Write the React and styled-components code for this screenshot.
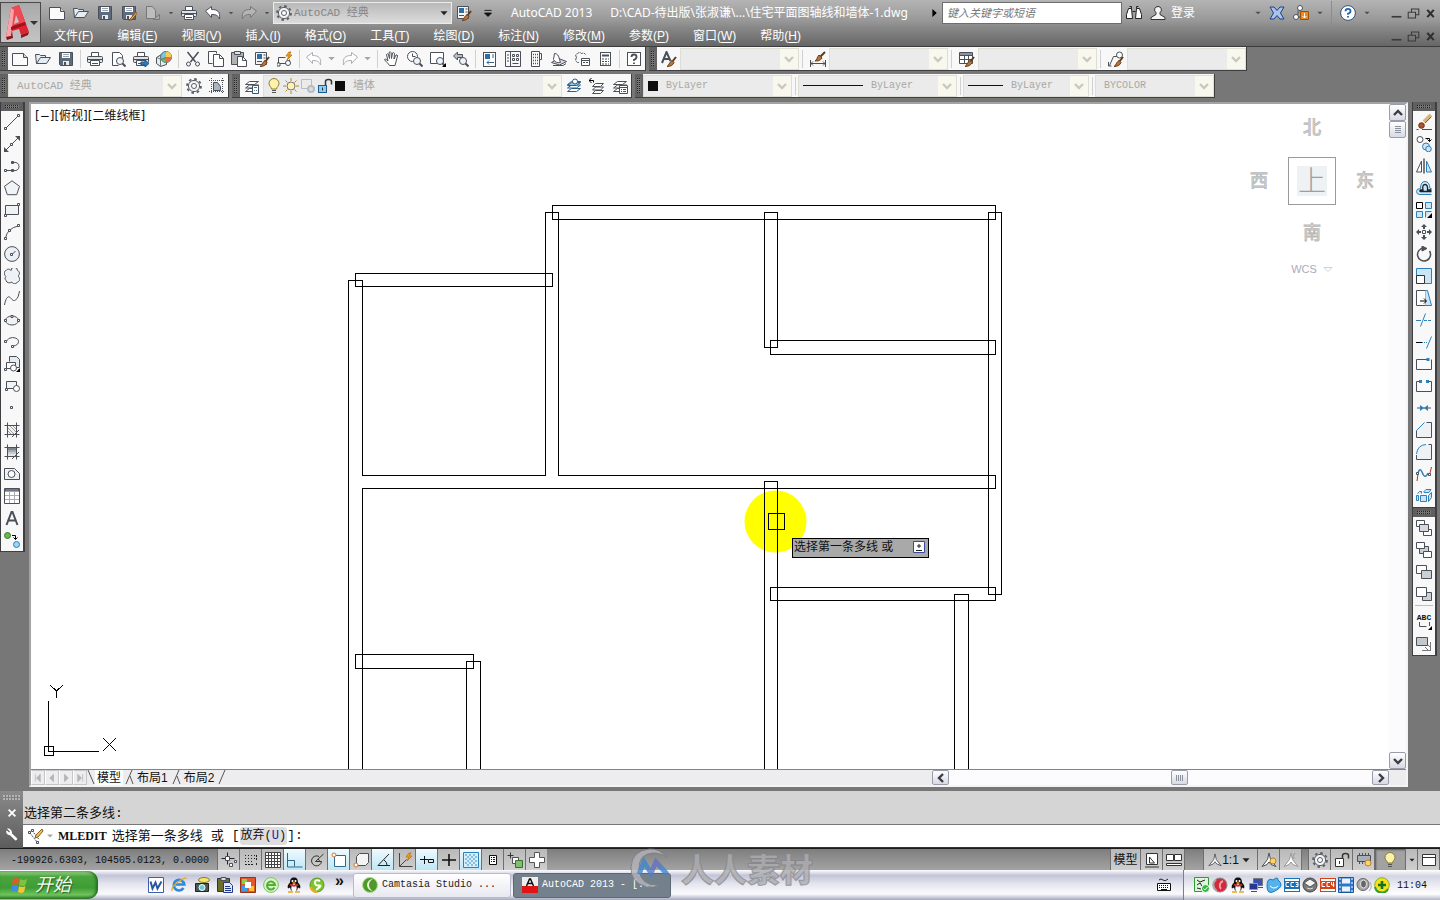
import React, { useState } from 'react';
import styled, { createGlobalStyle, css } from 'styled-components';

const SANS = '"Liberation Sans", "Noto Sans CJK SC", sans-serif';
const MONO = '"Liberation Mono", "Noto Sans CJK SC", monospace';
const TITLE = '"Noto Sans", "Noto Sans CJK SC", sans-serif';

const INK = '#4b4f58';
const BLUE = '#2f7fb8';
const SKY = '#c9e6f7';
const PALE = '#e6ebef';

/* ---------- icons ---------- */

const brush = (
    <>
        <path d="M15 6l-4 5" stroke="#5b3a1c" strokeWidth="2"/>
        <path d="M11 9.500l2 2c-1 3-4 4-7 4 2-1 2-4 5-6z" fill="#b9743a" stroke="#6b3f1a"/>
    </>
);
const disk = (
    <>
        <path d="M1.500 1.500h13v13h-12l-1-1z" fill="#5d6c7c"/>
        <path d="M4 2h8v5h-8z" fill="#fff" stroke="none"/>
        <path d="M5 3.500h6M5 5.500h6" stroke="#9aa5ae"/>
        <path d="M5 10h6v4h-6z" fill="#e8ecef" stroke="none"/>
        <path d="M6 11h2v3h-2z" fill={INK} stroke="none"/>
    </>
);
const printer = (
    <>
        <path d="M4.500 5.500v-4h7v4" fill="#fff"/>
        <rect x=".5" y="5.500" width="15" height="6" rx="1" fill="#dfe3e7"/>
        <path d="M1 8.500h14" stroke="#4b4f58"/>
        <path d="M3.500 9.500h9v5h-9z" fill="#fff"/>
        <path d="M5 12.500h6"/>
    </>
);
const lens = (
    <>
        <circle cx="10" cy="10" r="3.500" fill="#eef5fa"/>
        <path d="M12.500 12.500l3 3" strokeWidth="2"/>
    </>
);
const gear = (
    <>
        <circle cx="8" cy="8" r="7" strokeWidth="1.800" strokeDasharray="2.600 2.900" stroke="#5a5e66"/>
        <circle cx="8" cy="8" r="5.600" fill="#f4f4f4" stroke="#5a5e66"/>
        <circle cx="8" cy="8" r="2.500" fill="#fff" stroke="#5a5e66"/>
    </>
);
const bulb = (
    <>
        <path d="M5.500 11c0-2-2.500-3-2.500-5.500a5 5 0 0 1 10 0c0 2.500-2.500 3.500-2.500 5.500z" fill="#fdf3a8" stroke="#8a7a3c"/>
        <path d="M6 12.500h4M6 14.500h4" stroke="#555"/>
    </>
);
const layers = (
    <>
        <path d="M1.500 13.500l4-3h9l-4 3z" fill="#fff"/>
        <path d="M1.500 10l4-3h9l-4 3z" fill="#fff"/>
        <path d="M1.500 6.500l4-3h9l-4 3z" fill="#fff"/>
    </>
);
const penguin = (
    <>
        <path d="M8 .5c-3 0-4 2-4 5-2 2-3 4-2 6l2-1 1 3h6l1-3 2 1c1-2 0-4-2-6 0-3-1-5-4-5z" fill="#111" stroke="none"/>
        <path d="M8 7c-3 0-3.500 6-1.500 7h3c2-1 1.500-7-1.500-7z" fill="#fff" stroke="none"/>
        <path d="M4 7.500q4 2.500 8 0" stroke="#e02a1a" strokeWidth="2"/>
        <circle cx="6.500" cy="4" r="1" fill="#fff" stroke="none"/>
        <circle cx="9.500" cy="4" r="1" fill="#fff" stroke="none"/>
        <path d="M2 15h5M9 15h5M6.500 6h3" stroke="#f2a01a" strokeWidth="1.500"/>
    </>
);
const person = <path d="M8 1.500a3.300 3.300 0 0 1 2 6v2l5 3v2h-14v-2l5-3v-2a3.300 3.300 0 0 1 2-6z" fill="#f4f4f4" stroke="#333"/>;
const scaleMan = <path d="M8 1l1.500 6.500 5.500 7-5-2-2-2.500-2 2.500-5 2 5.500-7z" fill="#fff"/>;
const frame = <path d="M.5 3.500h15M.5 12.500h15M3.500 .5v15M12.500 .5v15"/>;
const orangeSpark = <path d="M12 1l-3 4h3l-2 4 5-5h-3l2-3z" fill="#f5a623" stroke="#c97a12"/>;
const unlocked = (
    <>
        <rect x="1.500" y="7.500" width="8" height="7" fill="#8ccdf5" stroke="#1c5c8c"/>
        <path d="M8.500 7v-3.500q0-2 3-2t3 2v3" stroke="#333" strokeWidth="1.500"/>
        <path d="M5.500 9.500v3" stroke="#333"/>
    </>
);

const icons = {
    new: (
        <>
            <path d="M.5 2.500h11l4 4v8h-15z" fill="#fbfbfb"/>
            <path d="M11.500 2.500v4h4" fill="#cfd5da"/>
        </>
    ),
    open: <path d="M1.500 12.500l-1-9h4l1 1h5v2M1.500 12.500l4-6h10l-4 6z" fill="#e3edf3"/>,
    save: disk,
    saveAs: (
        <>
            {disk}
            <path d="M15 7l-5 6-2 2.500 3-1 5-6z" fill="#f5b14a" stroke="#8a4d12"/>
        </>
    ),
    exportGrey: (
        <g stroke="#777">
            <path d="M1.500 1.500h6l3 4v8h-9z" fill="#bdbdbd"/>
            <path d="M8.500 14.500l6-5v5z" fill="#aaa"/>
        </g>
    ),
    print: printer,
    preview: (
        <>
            <path d="M2.500 14.500v-13h7l3 3v3M2.500 14.500h6" fill="#fff"/>
            {lens}
        </>
    ),
    publish: (
        <>
            {printer}
            <path d="M8 11h4v-2l4 3.500-4 3.500v-2h-4z" fill="#2d7cc0" stroke="#1b578c"/>
        </>
    ),
    globe3d: (
        <>
            <path d="M.5 6.500l5-3 5 2v8l-6 2-4-3z" fill="#e6eef3"/>
            <circle cx="10" cy="6" r="5.500" fill="#7cc4e8" stroke="#4b6f80"/>
            <path d="M10 .5v6h5.500a5.500 5.500 0 0 0-5.500-6z" fill="#f2d04c" stroke="none"/>
            <path d="M10 6h5.500a5.500 5.500 0 0 1-5.500 5.500z" fill="#e0704c" stroke="none"/>
            <path d="M10 11.500a5.500 5.500 0 0 1-5-4l5-1.500z" fill="#6ab85a" stroke="none"/>
            <path d="M4.500 8v7M1 6.500l4 2 5-2" stroke="#6d7880"/>
        </>
    ),
    cut: (
        <>
            <path d="M2.500 1l8 10M13.500 1l-8 10" strokeWidth="1.500"/>
            <circle cx="3.500" cy="13" r="2"/>
            <circle cx="12.500" cy="13" r="2"/>
        </>
    ),
    copyDoc: (
        <>
            <path d="M.5 12.500v-12h8v2" fill="#fff"/>
            <path d="M.5 12.500h4"/>
            <path d="M5.500 3.500h6l4 4v8h-10z" fill="#fff"/>
            <path d="M11.500 3.500v4h4"/>
        </>
    ),
    paste: (
        <>
            <path d="M.5 1.500h12v12h-12z" fill="#aeb3b4"/>
            <path d="M3.500 .5h6v3h-6z" fill="#dfe3e7"/>
            <path d="M6.500 5.500h5l4 4v6h-9z" fill="#fff"/>
            <path d="M11.500 5.500v4h4"/>
        </>
    ),
    match: (
        <>
            <path d="M1.500 1.500h11v12h-11z" fill="#f2f4f6"/>
            <path d="M3 3h5v5h-5z" fill="#2f6ea3" stroke="none"/>
            <path d="M9.500 4h2M9.500 7h2M3 10.500h5"/>
            {brush}
        </>
    ),
    blockEdit: (
        <>
            <path d="M1.500 6.500h7M1.500 6.500v6h11v-4"/>
            <circle cx="11" cy="12" r="2.500" fill="#fff"/>
            <path d="M0 12h3v3h-3z" fill="#fff"/>
            {orangeSpark}
        </>
    ),
    undo: <path d="M.5 6l6-4.500v3c6 0 9 2 8 9.500-1.500-4-4-4.500-8-4.500v3z" fill="#fff"/>,
    undoDim: <path d="M.5 6l6-4.500v3c6 0 9 2 8 9.500-1.500-4-4-4.500-8-4.500v3z" fill="#fff" stroke="#aaadb2"/>,
    redoDim: <path d="M15.500 6l-6-4.500v3c-6 0-9 2-8 9.500 1.500-4 4-4.500 8-4.500v3z" fill="#fff" stroke="#aaadb2"/>,
    redoGrey: <path d="M15.500 6l-6-4.500v3c-6 0-9 2-8 9.500 1.500-4 4-4.500 8-4.500v3z" fill="#b5b5b5" stroke="#777"/>,
    pan: <path d="M5.500 14.500c-1-2-4-4-5-6 1-1 2 0 3.500 1.500l-1.500-6.500q1.500-1.500 2 0l1 4-.5-6q1.500-1.500 2 0l.5 6 1-5.500q1.500-1 2 .5l-.5 5.500 2-4q1.500-.5 1.500 1l-2.500 9.500z" fill="#fff"/>,
    zoomRt: (
        <>
            <circle cx="5.500" cy="5.500" r="5" fill="#fff"/>
            <path d="M5.500 2.500v3h3"/>
            {lens}
        </>
    ),
    zoomWin: (
        <>
            <path d="M.5 1.500h13v11h-13z" fill="#fff"/>
            {lens}
            <path d="M16 12v4h-4z" fill="#000" stroke="none"/>
        </>
    ),
    zoomPrev: (
        <>
            <path d="M.5 5l4-4v2.500h5v3h-5v2.500z" fill="#b9bdc2"/>
            {lens}
        </>
    ),
    props: (
        <>
            <rect x="1.500" y="1.500" width="12" height="14" fill="#fff"/>
            <path d="M3 3h5v5h-5z" fill="#2f6ea3" stroke="none"/>
            <path d="M10 4h2M10 6h2M5 11.500h7M7 9.500l-2 2 2 2" stroke="#36648a"/>
        </>
    ),
    design: (
        <>
            <path d="M.5 .5h15v15h-15zM5.500 .5v15"/>
            <path d="M7.500 3.500h2v2h-2zM11.500 3.500h2v2h-2zM7.500 7.500h2v2h-2zM11.500 7.500h2v2h-2zM7.500 12.500h6M2 4h2M2 7h2M2 10h2"/>
        </>
    ),
    palettes: (
        <>
            <path d="M3.500 .5h8v15h-8zM11.500 2.500h2v6h-2" fill="#fff"/>
            <path d="M5 3.500h5M5 6.500h5M5 9.500h5M5 12.500h5" strokeDasharray="1 1" strokeWidth="1.500"/>
        </>
    ),
    sheets: (
        <>
            <path d="M.5 11.500l7-4 8 3-7 3.500z" fill="#dbe0e5"/>
            <path d="M2.500 8.500l1-6q4 0 5 6l1 3q-5 1-7-3z" fill="#fff"/>
            <path d="M2 14.500h10l3-2"/>
        </>
    ),
    markup: (
        <>
            <path d="M2.500 6.500q-2-3 1-4 2-2 4 0 3-1 4 1" strokeDasharray="3 1"/>
            <path d="M2.500 6.500q-2 3 1 5h2" strokeDasharray="3 1"/>
            <path d="M7.500 7.500h8v7h-8zM7.500 9.500h8M9 11.500h2M12 11.500h2" fill="#fff"/>
        </>
    ),
    calc: (
        <>
            <rect x="3.500" y="1.500" width="10" height="13" fill="#fff"/>
            <path d="M5 4.500h7" strokeWidth="2"/>
            <path d="M5 8h2M8 8h2M11 8h1M5 10.500h2M8 10.500h2M11 10.500h1M5 13h2M8 13h2M11 13h1"/>
        </>
    ),
    help: (
        <>
            <rect x="1.500" y="1.500" width="13" height="13" fill="#fff"/>
            <path d="M5.500 6q0-2.500 2.500-2.500t2.500 2.300-2.500 3v1.200M8 11.500v1.500" strokeWidth="1.800"/>
        </>
    ),
    textStyle: (
        <>
            <path d="M1 12l4.500-11 4 9M2.500 8h6" strokeWidth="2"/>
            {brush}
        </>
    ),
    dimStyle: (
        <>
            <path d="M.5 9v7M15.500 9v7M.5 12.500h15M3 10.500l-2 2 2 2M13 10.500l2 2-2 2"/>
            <path d="M15 1l-5 5" stroke="#5b3a1c" strokeWidth="2"/>
            <path d="M9 4l3 3c-2 3-4 3-7 3 2-1 2-4 4-6z" fill="#b9743a" stroke="#6b3f1a"/>
        </>
    ),
    tableStyle: (
        <>
            <path d="M.5 1.500h13v11h-13zM.5 4.500h13M.5 8.500h13M5.500 4.500v8M9.500 4.500v8" fill="#fff"/>
            <path d="M1 2h12v2h-12z" fill="#8d939c" stroke="none"/>
            {brush}
        </>
    ),
    leaderStyle: (
        <>
            <path d="M1.500 14.500l4-9h4M.5 11v4h3"/>
            <circle cx="11.500" cy="4" r="3" fill="#fff"/>
            {brush}
        </>
    ),
    gear,
    wsFrame: (
        <>
            <path d="M0 2.500h16M0 13.500h16M2.500 0v16M13.500 0v16" strokeDasharray="1 1"/>
            <path d="M4.500 12.500v-8h4l3 4v4z" fill="#a9b6c2"/>
        </>
    ),
    layerMgr: (
        <>
            {layers}
            <path d="M8.500 7.500h6v8h-6z" fill="#fff"/>
            <path d="M10 9.500h3M10 12.500h1M12 12.500h1" stroke={BLUE}/>
        </>
    ),
    bulb,
    sun: (
        <>
            <circle cx="8" cy="8" r="4" fill="#fbf3ae" stroke="#777"/>
            <path d="M8 0v3M8 13v3M0 8h3M13 8h3M2.500 2.500l2 2M11.500 11.500l2 2M13.500 2.500l-2 2M4.500 11.500l-2 2" stroke="#b8892a"/>
        </>
    ),
    vpFreeze: (
        <g stroke="#b9bcc0">
            <path d="M1.500 1.500h10v9h-10z"/>
            <circle cx="11" cy="11" r="3" strokeWidth="2" fill="#ddd"/>
        </g>
    ),
    unlocked,
    layerCur: (
        <g stroke="#2b5f88">
            {layers}
            <path d="M1.500 7.500l4-3h9l-4 3z" fill="#8fc7ea"/>
            <circle cx="9" cy="3.500" r="2.500" fill="#fff"/>
        </g>
    ),
    layerPrev: (
        <>
            <path d="M3.500 15.500l3-3h8l-3 3z" fill="#fff"/>
            <path d="M3.500 12l3-3h8l-3 3z" fill="#fff"/>
            <path d="M3.500 8.500l3-3h8l-3 3z" fill="#fff"/>
            <path d="M0 2.500h4.500v2M2.500 0l-2.500 2.500 2.500 2.500" stroke="#000"/>
        </>
    ),
    layerState: (
        <>
            {layers}
            <path d="M7.500 7.500h8v8h-8zM7.500 9.500h8M9 11.500h1M11 11.500h3M9 13.500h1M11 13.500h3" fill="#fff"/>
        </>
    ),
    /* draw */
    line: <path d="M2 14l12-12M.5 13.500h2v2h-2zM13.500 .5h2v2h-2z" fill="#fff"/>,
    xline: (
        <>
            <path d="M2 14l12-12"/>
            <path d="M0 16v-5l5 5zM16 0v5l-5-5z" fill={INK} stroke="none"/>
            <path d="M6.500 7.500h2v2h-2z" fill="#fff"/>
        </>
    ),
    pline: <path d="M2 12.500h6q7 1 7-4t-7-4M.5 11.500h2v2h-2zM7.500 11.500h2v2h-2zM7.500 3.500h2v2h-2z" fill="none"/>,
    polygon: <path d="M8 .8l7.500 5.500-2.800 8.400h-9.400l-2.800-8.400z" fill="#f1f4f6"/>,
    rect: (
        <>
            <path d="M1.500 3.500h13v9h-13z" fill="#eef2f4"/>
            <path d="M.5 12.500h2v2h-2zM13.500 1.500h2v2h-2z" fill="#fff"/>
        </>
    ),
    arc: (
        <>
            <path d="M1.500 14q2-10 13-12"/>
            <path d="M.5 13.500h2v2h-2zM4.500 5.500h2v2h-2zM13.500 .5h2v2h-2z" fill="#fff"/>
        </>
    ),
    circle: (
        <>
            <circle cx="8" cy="8" r="7.400" fill="#eaf0f4"/>
            <path d="M8.500 8l3-3M6.500 7.500h2v2h-2z" fill="#fff"/>
        </>
    ),
    cloud: <path d="M7 2.500a3.200 3.200 0 0 1 6.500 0c2.500 1 2.500 4 .5 5.500 2.500 2 2 5.500-.5 6-1.500 2.500-5 2-5.500 0-2 1.500-5.500 1-6-1.500-1.500-1.500-1-3.500 0-4-2.500-2-2-5.500 0-6 1.500-2 4-1.500 5 0z" fill="#eef2f4"/>,
    spline: <path d="M.5 15c1-6 3-9 5-8s3 5 6 3 3-5 4-9"/>,
    ellipse: (
        <>
            <ellipse cx="8" cy="8.500" rx="6.500" ry="4.500" fill="#eef2f4"/>
            <path d="M.5 7.500h2v2h-2zM13.500 7.500h2v2h-2zM7 3.500h2v2h-2z" fill="#fff"/>
        </>
    ),
    ellipseArc: <path d="M2.500 7q2-3.500 6-3.500 6 .5 6 4t-5 4.500M.5 6.500h2v2h-2zM7.500 11.500h2v2h-2z"/>,
    insert: (
        <>
            <path d="M5.500 5.500v-5h7l3 3v8h-3" fill={PALE}/>
            <path d="M2.500 6.500h9v6h-9z" fill="#fff"/>
            <circle cx="9.500" cy="12" r="3" fill="#fff"/>
            <path d="M.5 12.500h2v2h-2z" fill="#fff"/>
            <path d="M16 12v4h-4z" fill="#000" stroke="none"/>
        </>
    ),
    block: (
        <>
            <path d="M2.500 3.500h10v7h-10z" fill="#f1f4f6"/>
            <circle cx="12.500" cy="10.500" r="3" fill="#fff"/>
            <path d="M1.500 10.500h2v2h-2z" fill="#fff"/>
        </>
    ),
    point: <path d="M6.500 6.500h2v2h-2z"/>,
    hatch: (
        <>
            <path d="M4 4h8v8h-8z" fill="#f2f2f2" stroke="none"/>
            <path d="M4 6l6 6M4 9l3 3M6 4l6 6M9 4l3 3" stroke="#999"/>
            {frame}
            <path d="M8 15l7-7"/>
        </>
    ),
    gradient: (
        <>
            <path d="M4 4h8v8h-8z" fill="#e6e6e6" stroke="none"/>
            <path d="M4 5h8" stroke="#7d848c" strokeWidth="2"/>
            <path d="M4 7h8" stroke="#a3a9af" strokeWidth="2"/>
            <path d="M4 9h8" stroke="#c8ccd0" strokeWidth="2"/>
            {frame}
            <path d="M8 15l7-7"/>
        </>
    ),
    region: (
        <>
            <path d="M.5 2.500h10l5 5v6h-15z" fill="#eef2f4"/>
            <circle cx="7.500" cy="8" r="3.500" fill="#fff"/>
        </>
    ),
    table: (
        <>
            <path d="M.5 .5h15v15h-15z" fill="#fff"/>
            <path d="M1 1h14v2h-14z" fill="#9aa0b0"/>
            <path d="M5.500 4v11M10.500 4v11M1 7.500h14M1 11.500h14" stroke="#a9adb3"/>
        </>
    ),
    mtext: <path d="M2.500 15l5-13h1l5 13M4.500 10.500h7" strokeWidth="2"/>,
    addSel: (
        <>
            <circle cx="3.500" cy="3.500" r="3" fill="#6bb84f" stroke="#3d7a2a"/>
            <circle cx="12.500" cy="12.500" r="3" fill="#9bd4f7" stroke={BLUE}/>
            <path d="M8 3.500h3.500v4M9.500 5.500l2 2 2-2" stroke="#000"/>
        </>
    ),
    /* modify */
    erase: (
        <>
            <path d="M15 1l-7 7" stroke="#d9b37c" strokeWidth="4"/>
            <path d="M15 3l-6 6" stroke="#6b6b4a"/>
            <circle cx="5.500" cy="11.500" r="2.800" fill="#a6552d" stroke="#6e3213"/>
            <path d="M.5 15.500h2M6 15.500h10"/>
        </>
    ),
    copy: (
        <>
            <circle cx="4" cy="3.500" r="3" fill="#fff"/>
            <path d="M9.500 2.500h4v3M11.500 3.500l2 2 2-2" stroke="#000"/>
            <circle cx="10" cy="10.500" r="3.500" fill={SKY} stroke={BLUE}/>
            <circle cx="12.500" cy="13" r="2.800" fill={SKY} stroke={BLUE}/>
        </>
    ),
    mirror: (
        <>
            <path d="M5.500 3v11h-5z" fill="#fff"/>
            <path d="M10.500 3v11h5z" fill={SKY} stroke={BLUE}/>
            <path d="M8 .5v15" stroke="#000"/>
        </>
    ),
    offset: (
        <>
            <path d="M15.500 14.500h-11.500q-3.500 0-3.500-3t4-3q0-7 4.500-7t5 7h1.500" fill={SKY} stroke={BLUE}/>
            <path d="M15.500 11.500h-11q-1.500-.5 0-1.500h2.500q-1-5.500 2-5.500t2.500 5.500h4" strokeWidth="1.300" stroke="#222"/>
        </>
    ),
    array: (
        <>
            <path d="M.5 .5h6v6h-6z" fill="#fff" stroke="#000"/>
            <path d="M9.500 .5h6v6h-6zM.5 9.500h6v6h-6zM9.500 15.500v-6h6" fill={SKY} stroke={BLUE}/>
            <path d="M16 11v5h-5z" fill="#000" stroke="none"/>
        </>
    ),
    move: (
        <>
            <path d="M8 1v4M8 11v4M1 8h4M11 8h4" strokeWidth="2"/>
            <path d="M5 3l3-3 3 3zM5 13l3 3 3-3zM3 5l-3 3 3 3zM13 5l3 3-3 3z" fill={INK} stroke="none"/>
            <path d="M6.500 6.500h3v3h-3z" fill="#fff"/>
        </>
    ),
    rotate: (
        <>
            <path d="M8 2a6.500 6.500 0 1 0 5.500 3" strokeWidth="1.500"/>
            <path d="M6 0l5 2.500-5 2.500z" fill={INK}/>
        </>
    ),
    scale: (
        <>
            <path d="M.5 .5h15v15h-15z" fill={SKY} stroke={BLUE}/>
            <path d="M.5 7.500h8v8h-8z" fill="#fff" stroke="#333"/>
        </>
    ),
    stretch: (
        <>
            <path d="M9.500 .5h2l4 15h-6z" fill={SKY} stroke={BLUE}/>
            <path d="M9.500 .5h-9v15h9" fill="#fff"/>
            <path d="M4 11h6M8 8.500l2.500 2.500-2.500 2.500" stroke="#000"/>
        </>
    ),
    trim: (
        <g stroke={BLUE}>
            <path d="M4.500 14.500l5-13M0 8.500h5"/>
            <path d="M8 8.500h8" strokeDasharray="3 1"/>
        </g>
    ),
    extend: (
        <>
            <path d="M0 8.500h6" stroke="#000"/>
            <path d="M6 8.500h5" stroke={BLUE} strokeDasharray="1 1"/>
            <path d="M10.500 14.500l5-12" stroke={BLUE}/>
        </>
    ),
    breakPt: (
        <>
            <path d="M.5 3.500v10h15v-10M.5 3.500h11" fill="#f8fafc"/>
            <path d="M10.500 2h3v3h-3z" fill={BLUE} stroke="none"/>
        </>
    ),
    breakTwo: (
        <>
            <path d="M3 3.500h-2.500v10h15v-10h-2.500" fill="#f8fafc"/>
            <path d="M3 2h3v3h-3zM10 2h3v3h-3z" fill={BLUE} stroke="none"/>
        </>
    ),
    join: (
        <>
            <path d="M1 8h14"/>
            <path d="M4 5l4 3-4 3zM12 5l-4 3 4 3z" fill={BLUE} stroke="none"/>
        </>
    ),
    chamfer: (
        <>
            <path d="M.5 8.500v7h15v-15h-7z" fill="#eef2f4" stroke="none"/>
            <path d="M.5 8.500v7h15v-15h-5"/>
            <path d="M.5 8.500l8-8" stroke={BLUE}/>
        </>
    ),
    fillet: (
        <>
            <path d="M.5 10q1-9 9.500-9.500h5.500v15h-15z" fill="#eef2f4" stroke="none"/>
            <path d="M.5 11v4.500h15v-15h-3"/>
            <path d="M.5 10q1-9 9.500-9.500" stroke={BLUE}/>
        </>
    ),
    blend: (
        <>
            <path d="M2 7q2-6 4-1 3 8 6 1" stroke={BLUE} strokeWidth="1.500"/>
            <path d="M1 15l1-7M14 7l1.500-6" stroke="#a33"/>
            <path d="M.5 6.500h2v2h-2zM12.500 7.500h2v2h-2z" fill="#fff"/>
        </>
    ),
    explode: (
        <g stroke={BLUE} fill={SKY}>
            <path d="M4.500 7.500h6v6h-6zM1.500 5.500l2-2h2v2M8 3.500l2-2h5l-2 3h-5zM12.500 7.500l3-3v5l-3 4zM.5 7.500h2v5h-2z"/>
        </g>
    ),
    orderFront: (
        <>
            <path d="M.5 .5h8v6h-8z" fill="#fff"/>
            <path d="M7.500 9.500h8v6h-8z" fill="#fff"/>
            <path d="M3.500 4.500h9v7h-9z" fill="#d5d9dd"/>
        </>
    ),
    orderBack: (
        <>
            <path d="M3.500 4.500h9v7h-9z" fill="#c9ced3"/>
            <path d="M.5 .5h8v6h-8z" fill="#fff"/>
            <path d="M7.500 9.500h8v6h-8z" fill="#fff"/>
        </>
    ),
    orderAbove: (
        <>
            <path d="M.5 1.500h10v8h-10z" fill="#fff"/>
            <path d="M5.500 6.500h10v8h-10z" fill="#cbd0d5"/>
        </>
    ),
    orderUnder: (
        <>
            <path d="M6.500 6.500h9v8h-9z" fill="#cbd0d5"/>
            <path d="M.5 1.500h10v9h-10z" fill="#fff"/>
        </>
    ),
    orderHatch: (
        <>
            <path d="M6 14.500h9M14.500 6v9M9 11l4 4M12 9l3 3" stroke="#777"/>
            <path d="M.5 1.500h11v8h-11z" fill="#c3c8cd"/>
        </>
    ),
    /* title bar */
    binoculars: (
        <>
            <path d="M2.500 3.500h3l1 10h-6v-4zM13.500 3.500h-3l-1 10h6v-4z" fill="#fff" stroke="#222"/>
            <path d="M3.500 1.500h2v2M12.500 1.500h-2v2M6.500 6.500h3" stroke="#222"/>
        </>
    ),
    person,
    exchange: (
        <path d="M1 2h4l3 3.500 3-3.500h4l-3.500 6 3.500 6h-4l-3-3.500-3 3.500h-4l3.500-6z" fill="#a9c4ea" stroke="#1d3f86"/>
    ),
    network: (
        <>
            <path d="M6 4l-1.500 6M4 12h4" stroke="#777" strokeWidth="2"/>
            <circle cx="7" cy="3" r="2.500" fill="#fff"/>
            <circle cx="3" cy="12" r="2.500" fill="#fff"/>
            <path d="M7.500 6.500h8v8h-8z" fill="#e98a23" stroke="#9c4f08"/>
            <path d="M11.500 8v5M9.500 11l2 2 2-2" stroke="#fff"/>
        </>
    ),
    helpRound: (
        <>
            <circle cx="8" cy="8" r="7.400" fill="#fff" stroke="#33506e"/>
            <path d="M5.500 6.300q0-2.500 2.500-2.500t2.500 2.200-2.500 2.700v1M8 11v1.600" stroke="#1f62b0" strokeWidth="1.800"/>
        </>
    ),
    minimize: <path d="M2 12h12" stroke="#3a3a3a" strokeWidth="2"/>,
    restore: <path d="M5.500 6.500v-4h9v7h-4M1.500 6.500h9v7h-9z" stroke="#3a3a3a" strokeWidth="1.300"/>,
    close: <path d="M4 3.500l8 9M12 3.500l-8 9" stroke="#2f2f2f" strokeWidth="2.600"/>,
    /* command line */
    wrench: <path d="M3 2l3 3-1 2-3-2.500q-1 4 4 4.500l6 6q2-.5 1.500-2l-6-5.500q.5-5-4.500-5.500z" fill="#fff" stroke="#fff"/>,
    cross: <path d="M3.500 3.500l9 9M12.500 3.500l-9 9" stroke="#fff" strokeWidth="2.400"/>,
    editLine: (
        <>
            <path d="M2 5l7 9M4 2.500l7 9" strokeDasharray="2 1"/>
            <path d="M.5 3.500h2v2h-2zM3.500 1.500h2v2h-2zM8.500 13.500h2v2h-2z" fill="#fff"/>
            <path d="M14 1l-6 6-1 3 3-1 5-6z" fill="#f0bf62" stroke="#8a5d1a"/>
        </>
    ),
    /* status bar */
    infer: (
        <>
            <path d="M.5 6.500h13M6.500 .5v12" stroke="#222"/>
            <path d="M4.500 4.500h4v4h-4zM8.500 11.500h3v3h-3zM13.500 8.500h2v2h-2z" fill="#fff"/>
        </>
    ),
    snap: (
        <>
            <path d="M2 3.500h11M2 6.500h11M2 9.500h9" strokeDasharray="1 2" stroke="#222"/>
            <path d="M2 12.500h9M13.500 3v6M13.500 11v2" stroke="#222" strokeDasharray="2 1"/>
        </>
    ),
    grid: <path d="M.5 .5h15v15h-15zM3.500 .5v15M6.500 .5v15M9.500 .5v15M12.500 .5v15M.5 3.500h15M.5 6.500h15M.5 9.500h15M.5 12.500h15" fill="#fff" stroke="#444"/>,
    ortho: <path d="M.5 1v14h15M.5 8.500h7v6" stroke="#2c6a8c"/>,
    polar: <path d="M10 4.500a5 5 0 1 0 2.500 5h-6l8-7.500M9 7q1.500 1 1.500 2.500" stroke="#333"/>,
    osnap: (
        <>
            <path d="M3.500 3.500h11v11h-11z" fill="#fff" stroke="#2c6a8c"/>
            <circle cx="3" cy="3" r="2" fill="#fff" stroke="#d4732a"/>
        </>
    ),
    osnap3d: (
        <>
            <path d="M3.500 4.500l3-3h9v9l-3 3h-9z" fill="#f4f4f4"/>
            <circle cx="3" cy="13" r="2" fill="#fff" stroke="#d4732a"/>
        </>
    ),
    otrack: <path d="M14 2l-11 11.500h12M9 8q3 2 3 5" stroke="#222"/>,
    ducs: (
        <>
            <path d="M2.500 1v13.500h13M2.500 14.500l7-7" stroke="#444"/>
            {orangeSpark}
        </>
    ),
    dyn: <path d="M1 7.500h8M5.500 4v8M9.500 7.500h5v3h-5z" stroke="#111"/>,
    lwt: <path d="M1 8h14M8 2v12" stroke="#111" strokeWidth="1.600"/>,
    tpy: (
        <>
            <path d="M.5 .5h15v15h-15z" fill="#d8effb" stroke={BLUE}/>
            <path d="M2 3h12M2 7h12M2 11h12" stroke="#86bfe2" strokeWidth="2" strokeDasharray="2 2"/>
            <path d="M4 5h10M4 9h10M4 13h10" stroke="#86bfe2" strokeWidth="2" strokeDasharray="2 2"/>
        </>
    ),
    quick: (
        <>
            <path d="M4.500 3.500h7v9h-7z" fill="#fff" stroke="#111"/>
            <path d="M6 5.500h1M8 5.500h2M6 7.500h1M8 7.500h2M6 9.500h1M8 9.500h2" stroke="#111"/>
        </>
    ),
    selCycle: (
        <>
            <path d="M.5 3.500h6M3.500 .5v6" stroke="#333"/>
            <path d="M5.500 5.500h6v6h-6z" fill="#fff"/>
            <path d="M8.500 8.500h7v7h-7z" fill="#7fc06a" stroke="#3b6e2c"/>
        </>
    ),
    annoMon: <path d="M5.500 .5h5v5h5v5h-5v5h-5v-5h-5v-5h5z" fill="#fff" stroke="#555"/>,
    modelSheet: (
        <>
            <path d="M2.500 1.500h11v11h-11zM1 15h14" fill="#fff" stroke="#333"/>
            <path d="M5.500 5v6h5z" stroke="#333"/>
        </>
    ),
    quickView: <path d="M.5 2.500h7v6h-7zM8.500 2.500h7v6h-7zM.5 11.500h15v2h-15z" fill="#fff" stroke="#333"/>,
    anno: scaleMan,
    annoVis: (
        <>
            {scaleMan}
            <circle cx="12" cy="9" r="3" fill="#fbd36a" stroke="#b9822a"/>
        </>
    ),
    annoAuto: (
        <g stroke="#999">
            {scaleMan}
            <path d="M12 1l-3 5h3"/>
        </g>
    ),
    lockOpen: (
        <>
            <path d="M8.500 6v-2.500q0-2 3-2t3 2v3" stroke="#333" strokeWidth="1.500"/>
            <path d="M1.500 6.500h8v8h-8z" stroke="#333" fill="#fff"/>
            <path d="M5.500 9v3" stroke="#333"/>
        </>
    ),
    hardware: (
        <>
            <path d="M1.500 3.500h13v6h-13zM3.500 1v2M6.500 1v2M9.500 1v2M12.500 1v2M3.500 10v2M6.500 10v2" fill="#a7b0b8"/>
            <circle cx="12" cy="11" r="3" fill="#fbd36a" stroke="#b9822a"/>
        </>
    ),
    fullScreen: <path d="M1.500 2.500h13v11h-13zM1.500 5.500h13" fill="#fff" stroke="#333"/>,
    /* taskbar */
    word: (
        <>
            <path d="M.5 .5h15v15h-15z" fill="#fff" stroke="#3b5fa8"/>
            <path d="M2.500 4.500l2 7 3-6 2 6 4-7" stroke="#2a56a8" strokeWidth="2"/>
        </>
    ),
    ie: (
        <>
            <path d="M12.500 11a5.300 5.300 0 1 1 .8-3.500h-9" stroke="#2f8bd8" strokeWidth="2.600"/>
            <path d="M1 14q-1-4 6-9t8.500-3.500" stroke="#e0a92a" strokeWidth="1.300"/>
        </>
    ),
    camera: (
        <>
            <path d="M1.500 6.500h13v8h-13z" fill="#4a5a5c" stroke="#222"/>
            <circle cx="8" cy="10.500" r="3" fill="#6ccbd0" stroke="#fff"/>
            <ellipse cx="10" cy="3" rx="5.500" ry="2.500" fill="#f5e36a" stroke="#8a7d22"/>
        </>
    ),
    clipboard: (
        <>
            <path d="M.5 1.500h12v13h-12z" fill="#6b6f2e" stroke="#333"/>
            <path d="M4 .5h5v3h-5z" fill="#ddd"/>
            <path d="M6.500 5.500h6l3 3v7h-9z" fill="#dfe8ff" stroke="#223a8c"/>
            <path d="M8 9.500h5M8 11.500h6M8 13.500h6" stroke="#223a8c"/>
        </>
    ),
    tiles: (
        <>
            <path d="M.5 .5h15v15h-15z" fill="#e2572b" stroke="#9b2d16"/>
            <path d="M2 2h5v5h-5z" fill="#8bd04a" stroke="none"/>
            <path d="M9 9h5v5h-5z" fill="#f7c531" stroke="none"/>
            <path d="M2 9h5v5h-5z" fill="#3f9ee0" stroke="none"/>
            <path d="M5 5h6v6h-6z" fill="#fff" stroke="none"/>
        </>
    ),
    greenE: (
        <>
            <circle cx="8" cy="8" r="7.400" fill="#d9f2cc" stroke="#7cc35c"/>
            <path d="M11.500 10.500a4 4 0 1 1 .5-2.500h-7" stroke="#4fb02e" strokeWidth="2"/>
        </>
    ),
    penguin,
    swirl: (
        <>
            <circle cx="8" cy="8" r="7" fill="#7cc52c" stroke="#5a9a1a"/>
            <path d="M11 4q-5-2-5 1.500t4 3-3 4.500" stroke="#fff" strokeWidth="2"/>
            <path d="M1.500 10q1.500 5 7 5" stroke="#f4a820" strokeWidth="2.400"/>
        </>
    ),
    camtasia: (
        <>
            <circle cx="8" cy="8" r="7.500" fill="#4f9a26" stroke="#b5d79b"/>
            <path d="M11 2a6 6 0 0 0 0 12a7 7 0 0 1-4-6q0-4 4-6z" fill="#e9f7dc" stroke="none"/>
        </>
    ),
    acad: (
        <>
            <path d="M0 0h16v9h-16z" fill="#eee" stroke="none"/>
            <path d="M0 9h16v7h-16z" fill="#e01414" stroke="none"/>
            <path d="M4.500 9l3-7h1l3 7M5.500 6.500h5" stroke="#111" strokeWidth="1.500"/>
        </>
    ),
    keyboard: (
        <>
            <path d="M3 3q2-2 4 0t5-1" stroke="#222"/>
            <path d="M1.500 6.500h13v7h-13z" fill="#fff" stroke="#111"/>
            <path d="M3 8.500h10M3 10.500h10" stroke="#111" strokeDasharray="1 1"/>
            <path d="M5 12.500h6" stroke="#111"/>
        </>
    ),
    trayCheck: (
        <>
            <path d="M.5 .5h14v14h-14z" fill="#dff5d8" stroke="#2c9a3a"/>
            <path d="M3 3l3 2 5-2M3 8l3-2 2 3M3 11l4 1" stroke="#222"/>
            <circle cx="11.500" cy="11.500" r="4" fill="#3ab54a" stroke="#fff"/>
            <path d="M9.500 11.500l1.500 1.500 2.500-3" stroke="#fff"/>
        </>
    ),
    trayRed: (
        <>
            <circle cx="8" cy="8" r="7" fill="#d8263a" stroke="#8a8a8a"/>
            <path d="M11 4a5 5 0 0 0-2 8" stroke="#f3a0a8" strokeWidth="2"/>
            <path d="M4 2.500a7 7 0 0 0 1 11.500" stroke="#aaa" strokeWidth="2"/>
        </>
    ),
    trayNet: (
        <>
            <path d="M5.500 1.500h9v7h-9z" fill="#3a4fae" stroke="#777"/>
            <path d="M1.500 6.500h8v6h-8z" fill="#27398f" stroke="#999"/>
            <path d="M3 14.500h6M10 10.500h5"/>
        </>
    ),
    trayBlue: (
        <>
            <path d="M7 3q5-4 5 0 3 2 3 5t-7 6.500-7-5.500 6-6z" fill="#54b2ec" stroke="#1d78b8"/>
            <path d="M4 9q4 4 8 0" stroke="#fff"/>
        </>
    ),
    cc3: (
        <>
            <rect x=".5" y="1.500" width="15" height="13" fill="#fff" stroke="#1673b8"/>
            <path d="M0 4h16v8h-16z" fill="#1673b8" stroke="none"/>
            <path d="M5 5.500h-3v4h3M10 5.500h-3v4h3M11.500 5.500h2.500v4h-2.500M12 7.500h2" stroke="#fff"/>
        </>
    ),
    trayBox: (
        <>
            <circle cx="8" cy="8" r="7" fill="#7a7a7a" stroke="#444"/>
            <path d="M2 6l6-4 6 4-6 4z" fill="#f4f4f4" stroke="#555"/>
            <path d="M5 11q3 2 6 0" stroke="#ddd"/>
        </>
    ),
    cc4: (
        <>
            <rect x=".5" y="1.500" width="15" height="13" fill="#fff" stroke="#d4421a"/>
            <path d="M0 4h16v8h-16z" fill="#d4421a" stroke="none"/>
            <path d="M5 5.500h-3v4h3M10 5.500h-3v4h3M11.500 5v3h3M13.500 5v5" stroke="#fff"/>
        </>
    ),
    film: (
        <>
            <path d="M.5 .5h15v15h-15z" fill="#2d78c8" stroke="#1d56a0"/>
            <path d="M4 1.500h8v5h-8zM4 9.500h8v5h-8z" fill="#eaf4ff" stroke="none"/>
            <path d="M2 1v14M14 1v14" stroke="#fff" strokeDasharray="2 2"/>
        </>
    ),
    speaker: (
        <>
            <circle cx="7" cy="7.500" r="6" fill="#aaa" stroke="#666"/>
            <ellipse cx="7.500" cy="7" rx="3" ry="4" fill="#666" stroke="#e4e4e4"/>
            <path d="M13 14q4-4 1-9" stroke="#a5a8b8"/>
        </>
    ),
    trayPlus: (
        <>
            <circle cx="8" cy="8" r="7.300" fill="#f3e21c" stroke="#8fae1c"/>
            <path d="M1 10a7 7 0 0 0 13 2" stroke="#2f9e2c" strokeWidth="2"/>
            <path d="M8 4v8M4 8h8" stroke="#14731c" strokeWidth="2.600"/>
        </>
    ),
    chevDown: <path d="M4 6l4 4 4-4" strokeWidth="2.400"/>,
    chevUp: <path d="M4 10l4-4 4 4" strokeWidth="2.400"/>,
    chevLeft: <path d="M10 4l-4 4 4 4" strokeWidth="2.400"/>,
    chevRight: <path d="M6 4l4 4-4 4" strokeWidth="2.400"/>,
    thumbH: <path d="M4.500 5v6M6.500 5v6M8.500 5v6M10.500 5v6" stroke="#8a8f9c"/>,
    thumbV: <path d="M5 4.500h6M5 6.500h6M5 8.500h6M5 10.500h6" stroke="#8a8f9c"/>,
    navFirst: <path d="M4.500 3v10M11 3l-5 5 5 5z" fill="#b4b4b4" stroke="#b4b4b4"/>,
    navPrev: <path d="M10 3l-5 5 5 5z" fill="#b4b4b4" stroke="#b4b4b4"/>,
    navNext: <path d="M6 3l5 5-5 5z" fill="#b4b4b4" stroke="#b4b4b4"/>,
    navLast: <path d="M11.500 3v10M5 3l5 5-5 5z" fill="#b4b4b4" stroke="#b4b4b4"/>,
    caret: <path d="M4 6h8l-4 4.500z" fill="#222" stroke="none"/>,
    caretDim: <path d="M5 6.500h6l-3 3z" fill="#4e4e4e" stroke="none"/>,
    caretLight: <path d="M4 6h8l-4 4z" fill="#a5a5a5" stroke="none"/>,
    playRight: <path d="M5 3.500l5 4.500-5 4.500z" fill="#000" stroke="none"/>,
    customize: <path d="M4 5h8M4 8h8l-4 4z" fill="#111" stroke="#111"/>,
};

const Svg = styled.svg`
    display: block;
    flex: none;
    fill: none;
    stroke: ${INK};
    stroke-width: 1;
`

const Icon = ({ name, size = 16 }) => (
    <Svg viewBox="0 0 16 16" width={size} height={size} aria-hidden="true">{icons[name]}</Svg>
);

/* ---------- data ---------- */

const menus = [
    ['文件', 'F'], ['编辑', 'E'], ['视图', 'V'], ['插入', 'I'], ['格式', 'O'], ['工具', 'T'],
    ['绘图', 'D'], ['标注', 'N'], ['修改', 'M'], ['参数', 'P'], ['窗口', 'W'], ['帮助', 'H'],
];

const standardTools = [
    'new', 'open', 'save', '|', 'print', 'preview', 'publish', 'globe3d', '|',
    'cut', 'copyDoc', 'paste', 'match', 'blockEdit', '|', 'undoDim', 'v', 'redoDim', 'v', '|',
    'pan', 'zoomRt', 'zoomWin', 'zoomPrev', '|', 'props', 'design', 'palettes', 'sheets', 'markup', 'calc', '|', 'help',
];

const styleTools = [
    ['textStyle', '文字样式'], ['dimStyle', '标注样式'], ['tableStyle', '表格样式'], ['leaderStyle', '多重引线样式'],
];

const drawTools = [
    'line', 'xline', 'pline', 'polygon', 'rect', 'arc', 'circle', 'cloud', 'spline', 'ellipse',
    'ellipseArc', 'insert', 'block', 'point', 'hatch', 'gradient', 'region', 'table', 'mtext', 'addSel',
];

const modifyTools = [
    'erase', 'copy', 'mirror', 'offset', 'array', 'move', 'rotate', 'scale', 'stretch', 'trim',
    'extend', 'breakPt', 'breakTwo', 'join', 'chamfer', 'fillet', 'blend', 'explode',
];

const statusToggles = [
    'infer', 'snap', 'grid', 'ortho', 'polar', 'osnap', 'osnap3d', 'otrack',
    'ducs', 'dyn', 'lwt', 'tpy', 'quick', 'selCycle', 'annoMon',
];

const quickLaunch = ['word', 'ie', 'camera', 'clipboard', 'tiles', 'greenE', 'penguin', 'swirl'];

const tray = [
    'trayCheck', 'trayRed', 'penguin', 'trayNet', 'trayBlue', 'cc3', 'trayBox', 'cc4', 'film', 'speaker', 'trayPlus',
];

// x, y, width, height of every closed multiline
const walls = [
    [552, 205, 443, 14],
    [764, 212, 13, 135],
    [988, 212, 13, 382],
    [770, 340, 225, 14],
    [355, 273, 197, 13],
    [770, 587, 225, 13],
    [355, 654, 118, 14],
    [764, 481, 13, 2000],
    [954, 594, 14, 2000],
    [466, 661, 14, 2000],
];

/* ---------- shared parts ---------- */

const Combo = ({ label, value, lead, width, tone, small }) => (
    <ComboBox $width={width} $tone={tone}>
        {lead}
        <ComboSelect aria-label={label} defaultValue={value} $tone={tone} $small={small}>
            <option value={value}>{value}</option>
        </ComboSelect>
        <ComboArrow $tone={tone}>
            <Icon name={tone === 'title' ? 'caret' : 'chevDown'} size={tone === 'title' ? 14 : 16}/>
        </ComboArrow>
    </ComboBox>
);

const Tool = ({ name }) => (
    <ToolBtn type="button" aria-label={name}><Icon name={name}/></ToolBtn>
);

const Drawing = () => (
    <DrawingSvg aria-label="住宅平面图">
        <g transform="translate(-31 -104)">
            <circle cx="775.500" cy="521.500" r="31" fill="#ffff00" stroke="none"/>
            <g shapeRendering="crispEdges" transform="translate(.5 .5)">
                {walls.map(([x, y, w, h]) => (
                    <rect key={`${x}-${y}`} x={x} y={y} width={w} height={h}/>
                ))}
                <path d="M348 2000V280H362V475H545V212H558V475H995V488H362V2000"/>
                <rect x="768" y="513" width="16" height="16"/>
            </g>
        </g>
    </DrawingSvg>
);

/* ---------- page ---------- */

const App = () => {
    const [active, setActive] = useState(['ortho', 'osnap', 'otrack', 'dyn', 'tpy']);
    const [sheet, setSheet] = useState('模型');

    const toggle = (name) => {
        setActive(active.includes(name) ? active.filter((n) => n !== name) : [...active, name]);
    };

    return (
        <Page>
            <GlobalStyle/>
            <Header>
                <AppButton type="button" aria-label="应用程序菜单">
                    <svg width="38" height="38" viewBox="0 0 38 38" aria-hidden="true">
                        <path d="M4 34L9 5l8-3 10 27-8 3-2-6-7 2-1 5z" fill="#dd2430"/>
                        <path d="M9 5l8-3 6 17-14 4z" fill="#ee4a54"/>
                        <path d="M4 34L9 5l3 2-3 26z" fill="#f7a3a8"/>
                        <path d="M14 12l3 7-5 2z" fill="#c8c4c4"/>
                        <path d="M9 24l14-5 1 3-15 5z" fill="#a3121c"/>
                        <path d="M4 34l5-1 1-5 1 7-6 2zM19 32l8-3-1 3-7 3z" fill="#8e1018"/>
                        <path d="M28 18h8l-4 4z" fill="#333"/>
                    </svg>
                </AppButton>
                <HeaderRows>
                    <TitleRow>
                        <QuickBar>
                            {['new', 'open', 'save', 'saveAs', 'exportGrey'].map((n) => (
                                <QuickBtn type="button" key={n} aria-label={n}><Icon name={n}/></QuickBtn>
                            ))}
                            <Icon name="caretDim" size={12}/>
                            <QuickBtn type="button" aria-label="print"><Icon name="print"/></QuickBtn>
                            <QuickBtn type="button" aria-label="undo"><Icon name="undo"/></QuickBtn>
                            <Icon name="caretDim" size={12}/>
                            <QuickBtn type="button" aria-label="redo"><Icon name="redoGrey"/></QuickBtn>
                            <Icon name="caretDim" size={12}/>
                        </QuickBar>
                        <Combo label="工作空间" value="AutoCAD 经典" width={179} tone="title" lead={<Icon name="gear"/>}/>
                        <QuickBtn type="button" aria-label="match"><Icon name="match"/></QuickBtn>
                        <QuickBtn type="button" aria-label="customize"><Icon name="customize" size={14}/></QuickBtn>
                        <Title>
                            <span>AutoCAD 2013</span>
                            <span>D:\CAD-待出版\张淑谦\...\住宅平面图轴线和墙体-1.dwg</span>
                        </Title>
                        <InfoCenter>
                            <Icon name="playRight" size={14}/>
                            <Search type="search" aria-label="搜索" placeholder="键入关键字或短语"/>
                            <QuickBtn type="button" aria-label="search"><Icon name="binoculars"/></QuickBtn>
                            <Login type="button"><Icon name="person"/>登录</Login>
                            <Account>
                                <Icon name="caretDim" size={14}/>
                                <QuickBtn type="button" aria-label="exchange"><Icon name="exchange"/></QuickBtn>
                                <QuickBtn type="button" aria-label="network"><Icon name="network"/></QuickBtn>
                                <Icon name="caretDim" size={14}/>
                            </Account>
                            <QuickBtn type="button" aria-label="help"><Icon name="helpRound"/></QuickBtn>
                            <Icon name="caretDim" size={14}/>
                        </InfoCenter>
                        <WindowButtons/>
                    </TitleRow>
                    <MenuRow>
                        {menus.map(([name, key]) => (
                            <MenuItem type="button" key={key}>{name}(<u>{key}</u>)</MenuItem>
                        ))}
                        <WindowButtons/>
                    </MenuRow>
                </HeaderRows>
            </Header>

            <ToolRows>
                <ToolRow>
                    <Toolbar>
                        <Grip/>
                        {standardTools.map((n, i) => {
                            if (n === '|') return <Divider key={i}/>;
                            if (n === 'v') return <Icon key={i} name="caretLight" size={13}/>;
                            return <Tool key={i} name={n}/>;
                        })}
                    </Toolbar>
                    <Toolbar>
                        <Grip/>
                        {styleTools.map(([icon, label], i) => (
                            <React.Fragment key={icon}>
                                {i > 0 && <Divider $wide/>}
                                <Tool name={icon}/>
                                <Combo label={label} value="" width={119}/>
                            </React.Fragment>
                        ))}
                    </Toolbar>
                </ToolRow>
                <ToolRow>
                    <Toolbar>
                        <Grip/>
                        <Combo label="工作空间" value="AutoCAD 经典" width={174}/>
                        <Tool name="gear"/>
                        <Tool name="wsFrame"/>
                    </Toolbar>
                    <Toolbar>
                        <Grip/>
                        <Tool name="layerMgr"/>
                        <Combo
                            label="图层"
                            value="墙体"
                            width={299}
                            lead={(
                                <LayerState>
                                    <Icon name="bulb"/>
                                    <Icon name="sun"/>
                                    <Icon name="vpFreeze"/>
                                    <Icon name="unlocked"/>
                                    <Swatch/>
                                </LayerState>
                            )}
                        />
                        <Tool name="layerCur"/>
                        <Tool name="layerPrev"/>
                        <Tool name="layerState"/>
                    </Toolbar>
                    <Toolbar>
                        <Grip/>
                        <Combo label="颜色" value="ByLayer" width={149} small lead={<Swatch $pad/>}/>
                        <Divider/>
                        <Combo label="线型" value="ByLayer" width={159} small lead={<LineSample $width={60}/>}/>
                        <Divider/>
                        <Combo label="线宽" value="ByLayer" width={126} small lead={<LineSample $width={35}/>}/>
                        <Divider/>
                        <Combo label="打印样式" value="BYCOLOR" width={119} small/>
                    </Toolbar>
                </ToolRow>
            </ToolRows>

            <Workspace>
                <SideBar>
                    <SideTools>
                        <SideGrip/>
                        {drawTools.map((n) => <SideBtn type="button" key={n} aria-label={n}><Icon name={n}/></SideBtn>)}
                    </SideTools>
                </SideBar>

                <DrawingWindow>
                    <ViewArea>
                        <Viewport>
                            <Drawing/>
                            <ViewLabel>[−][俯视][二维线框]</ViewLabel>
                            <ViewCube>
                                <Compass>北</Compass>
                                <CubeRow>
                                    <Compass>西</Compass>
                                    <CubeFace type="button"><span>上</span></CubeFace>
                                    <Compass>东</Compass>
                                </CubeRow>
                                <Compass>南</Compass>
                                <Wcs type="button">
                                    WCS
                                    <svg width="10" height="6" viewBox="0 0 10 6" aria-hidden="true">
                                        <path d="M1 .5h8l-4 4z" fill="none" stroke="#cfd2e2"/>
                                    </svg>
                                </Wcs>
                            </ViewCube>
                            <Ucs width="76" height="76" viewBox="0 0 76 76" aria-hidden="true">
                                <path d="M5.500 17v50h50"/>
                                <path d="M1.500 62.500h9v9h-9z"/>
                                <path d="M7 1l6.500 6 6.500-6M13.500 7v7M60 54l13 13M73 54l-13 13"/>
                            </Ucs>
                            <Tooltip>
                                选择第一条多线 或
                                <svg width="12" height="12" viewBox="0 0 12 12" aria-hidden="true">
                                    <path d="M.5 .5h11v11h-11z" fill="#fff" stroke="#3a4aa0"/>
                                    <path d="M6 3v4M4 5h4M3 9.500h6" stroke="#222"/>
                                </svg>
                            </Tooltip>
                        </Viewport>
                        <ScrollV>
                            <ScrollBtn type="button" aria-label="向上"><Icon name="chevUp"/></ScrollBtn>
                            <ScrollBtn type="button" aria-label="滑块"><Icon name="thumbV"/></ScrollBtn>
                            <Spring/>
                            <ScrollBtn type="button" aria-label="向下"><Icon name="chevDown"/></ScrollBtn>
                        </ScrollV>
                    </ViewArea>
                    <SheetRow>
                        {['navFirst', 'navPrev', 'navNext', 'navLast'].map((n) => (
                            <NavBtn type="button" key={n} aria-label={n}><Icon name={n} size={12}/></NavBtn>
                        ))}
                        <Slant viewBox="0 0 8 15" width="8" height="15" aria-hidden="true"><path d="M1 0l6 14"/></Slant>
                        {['模型', '布局1', '布局2'].map((s) => (
                            <React.Fragment key={s}>
                                <SheetTab type="button" $on={s === sheet} onClick={() => setSheet(s)}>{s}</SheetTab>
                                <Slant viewBox="0 0 12 15" width="12" height="15" aria-hidden="true">
                                    <path d="M3 14l6-14"/>
                                    {s !== '布局2' && <path d="M7 6l3 8"/>}
                                </Slant>
                            </React.Fragment>
                        ))}
                        <Spring/>
                        <ScrollH>
                            <ScrollBtn type="button" aria-label="向左"><Icon name="chevLeft"/></ScrollBtn>
                            <Spring $n={222}/>
                            <ScrollBtn type="button" aria-label="滑块"><Icon name="thumbH"/></ScrollBtn>
                            <Spring $n={184}/>
                            <ScrollBtn type="button" aria-label="向右"><Icon name="chevRight"/></ScrollBtn>
                        </ScrollH>
                        <Corner/>
                    </SheetRow>
                </DrawingWindow>

                <SideBar>
                    <SideTools>
                        <SideGrip/>
                        {modifyTools.map((n) => <SideBtn type="button" key={n} aria-label={n}><Icon name={n}/></SideBtn>)}
                    </SideTools>
                    <SideTools>
                        <SideGrip/>
                        {['orderFront', 'orderBack', 'orderAbove', 'orderUnder'].map((n) => (
                            <SideBtn type="button" key={n} aria-label={n}><Icon name={n}/></SideBtn>
                        ))}
                        <SideDivider/>
                        <SideBtn type="button" aria-label="文字置前">
                            <AbcIcon>ABC</AbcIcon>
                            <svg width="16" height="8" viewBox="0 0 16 8" fill="none" stroke={INK} aria-hidden="true">
                                <path d="M3.500 0v4.500h7M13.500 0v4"/>
                                <path d="M16 4v4h-4z" fill="#000" stroke="none"/>
                            </svg>
                        </SideBtn>
                        <SideBtn type="button" aria-label="orderHatch"><Icon name="orderHatch"/></SideBtn>
                    </SideTools>
                </SideBar>
            </Workspace>

            <Command>
                <CommandStrip>
                    <CommandGrip/>
                    <StripBtn type="button" aria-label="关闭"><Icon name="cross" size={12}/></StripBtn>
                    <StripBtn type="button" aria-label="自定义"><Icon name="wrench" size={14}/></StripBtn>
                </CommandStrip>
                <CommandBody>
                    <History>选择第二条多线:</History>
                    <Prompt>
                        <Icon name="editLine"/>
                        <Icon name="caretLight" size={12}/>
                        <strong>MLEDIT</strong>
                        <span>选择第一条多线</span>
                        <span>或</span>
                        <PromptOptions>
                            [<Option type="button">放弃(<b>U</b>)</Option>]:
                        </PromptOptions>
                        <PromptInput aria-label="命令"/>
                    </Prompt>
                </CommandBody>
            </Command>

            <StatusBar>
                <Coords>-199926.6303, 104505.0123, 0.0000</Coords>
                {statusToggles.map((n) => (
                    <StatusBtn
                        type="button"
                        key={n}
                        aria-label={n}
                        aria-pressed={active.includes(n)}
                        $on={active.includes(n)}
                        onClick={() => toggle(n)}
                    >
                        <Icon name={n}/>
                    </StatusBtn>
                ))}
                <Spring/>
                <StatusGroup>
                    <StatusBtn type="button" $width={30}>模型</StatusBtn>
                    <StatusBtn type="button" aria-label="布局"><Icon name="modelSheet"/></StatusBtn>
                    <StatusBtn type="button" aria-label="快速查看"><Icon name="quickView"/></StatusBtn>
                </StatusGroup>
                <StatusGroup $gap={18}>
                    <StatusBtn type="button" $width={54}><Icon name="anno" size={14}/>1:1<Icon name="caret" size={14}/></StatusBtn>
                    <StatusBtn type="button" aria-label="注释可见性"><Icon name="annoVis"/></StatusBtn>
                    <StatusBtn type="button" aria-label="自动缩放"><Icon name="annoAuto"/></StatusBtn>
                </StatusGroup>
                <StatusGroup $gap={6}>
                    <StatusBtn type="button" aria-label="切换工作空间"><Icon name="gear"/></StatusBtn>
                    <StatusBtn type="button" aria-label="锁定"><Icon name="lockOpen"/></StatusBtn>
                    <StatusBtn type="button" aria-label="硬件加速"><Icon name="hardware"/></StatusBtn>
                    <StatusBtn type="button" aria-label="隔离对象" $width={31} $pressed><Icon name="bulb"/></StatusBtn>
                    <StatusBtn type="button" aria-label="状态栏菜单" $width={12}><Icon name="caret" size={10}/></StatusBtn>
                    <StatusBtn type="button" aria-label="全屏显示"><Icon name="fullScreen"/></StatusBtn>
                </StatusGroup>
            </StatusBar>

            <Taskbar>
                <Start type="button">
                    <svg width="20" height="18" viewBox="0 0 20 18" aria-hidden="true">
                        <path d="M3 3q3-2 6 0l-1 6q-3-2-6 0z" fill="#e8562a"/>
                        <path d="M10 3q3 2 7 0l-1.500 6q-3 2-6.500 0z" fill="#7fc241"/>
                        <path d="M2 10q3-2 6 0l-1 6q-3-2-6 0z" fill="#3f8fe0"/>
                        <path d="M9 10q3 2 6.500 0l-1.500 6q-3 2-6 0z" fill="#f7c62f"/>
                    </svg>
                    开始
                </Start>
                <QuickLaunch>
                    {quickLaunch.map((n) => <LaunchBtn type="button" key={n} aria-label={n}><Icon name={n}/></LaunchBtn>)}
                    <More type="button">»</More>
                </QuickLaunch>
                <TaskBtn type="button"><Icon name="camtasia"/>Camtasia Studio ...</TaskBtn>
                <TaskBtn type="button" $on><Icon name="acad"/>AutoCAD 2013 - [...</TaskBtn>
                <Spring/>
                <Language type="button" aria-label="输入法"><Icon name="keyboard"/></Language>
                <Tray>
                    {tray.map((n) => <TrayBtn type="button" key={n} aria-label={n}><Icon name={n}/></TrayBtn>)}
                    <Clock>11:04</Clock>
                </Tray>
                <Watermark>
                    <svg width="42" height="40" viewBox="0 0 42 40" fill="none" aria-hidden="true">
                        <path d="M38 10Q31 0 20 1 3 3 2 19t16 20q8 1 12-2-18 1-20-15Q9 6 24 5q9 0 14 5z" fill="#b4b5b9" stroke="#7d7f84"/>
                        <path d="M10 26l5-12 7 11 5-11 11 12" stroke="#3f86cc" strokeWidth="5"/>
                        <path d="M22 25l5-11 4 5" stroke="#6a6fc0" strokeWidth="4"/>
                    </svg>
                    人人素材
                </Watermark>
            </Taskbar>
        </Page>
    );
};

const WindowButtons = () => (
    <WinBtns>
        {['minimize', 'restore', 'close'].map((n) => (
            <WinBtn type="button" key={n} aria-label={n}><Icon name={n} size={13}/></WinBtn>
        ))}
    </WinBtns>
);

const GlobalStyle = createGlobalStyle`
    * {
        box-sizing: border-box;
    }
    body {
        margin: 0;
        background: #777777;
        font-family: ${SANS};
        font-size: 12px;
        color: #111;
    }
    button, select, input {
        margin: 0;
        padding: 0;
        border: none;
        background: none;
        color: inherit;
        font: inherit;
        line-height: 1;
        border-radius: 0;
    }
`

const Page = styled.div`
    display: flex;
    flex-direction: column;
    min-height: 100vh;
    min-width: 1280px;
    overflow: hidden;
`
const Header = styled.header`
    display: flex;
    background: linear-gradient(#b4b4b4, #989898 45%, #888888 60%, #666666);
    border-bottom: 1px solid #3c3c3c;
`
const AppButton = styled.button`
    flex: none;
    width: 41px;
    height: 41px;
    margin-top: 2px;
    border: 1px solid #4a4a4a;
    background: linear-gradient(#a9a9a9, #c4c4c4);
`
const HeaderRows = styled.div`
    flex: 1;
    min-width: 0;
`
const TitleRow = styled.div`
    display: flex;
    align-items: center;
    height: 26px;
    padding-left: 4px;
`
const QuickBar = styled.div`
    display: flex;
    align-items: center;
`
const QuickBtn = styled.button`
    display: flex;
    align-items: center;
    justify-content: center;
    flex: none;
    width: 24px;
    height: 24px;
`
const Title = styled.div`
    display: flex;
    gap: 18px;
    flex: 1;
    min-width: 0;
    padding-left: 11px;
    overflow: hidden;
    white-space: nowrap;
    color: #fff;
    font-family: ${TITLE};
    font-size: 12px;
    line-height: 20px;
`
const InfoCenter = styled.div`
    display: flex;
    align-items: center;
`
const Search = styled.input`
    width: 180px;
    height: 22px;
    padding: 0 4px;
    background: #fff;
    border: 1px solid #6d6d6d;
    font-size: 11px;
    &::placeholder {
        color: #777;
        font-style: italic;
        opacity: 1;
    }
`
const Login = styled.button`
    display: flex;
    align-items: center;
    gap: 5px;
    margin-left: 4px;
    color: #fff;
    font-size: 12px;
`
const Account = styled.div`
    display: flex;
    align-items: center;
    margin: 0 4px 0 56px;
    padding-right: 4px;
    border-right: 1px solid #8c8c8c;
`
const WinBtns = styled.div`
    display: flex;
    margin-left: auto;
    padding: 0 1px 0 14px;
`
const WinBtn = styled.button`
    display: flex;
    align-items: center;
    justify-content: center;
    width: 17px;
    height: 18px;
`
const MenuRow = styled.nav`
    display: flex;
    align-items: center;
    gap: 24px;
    height: 20px;
    padding-left: 13px;
`
const MenuItem = styled.button`
    color: #fff;
    font-size: 12px;
    line-height: 18px;
    white-space: nowrap;
    u {
        text-underline-offset: 2px;
    }
`

const ToolRows = styled.div`
    display: flex;
    flex-direction: column;
    gap: 3px;
    padding-bottom: 4px;
`
const ToolRow = styled.div`
    display: flex;
    gap: 3px;
`
const Toolbar = styled.div`
    display: flex;
    align-items: center;
    height: 24px;
    background: #f8f8f8;
    border-bottom: 1px solid #3f3f42;
    border-right: 1px solid #3f3f42;
`
const Grip = styled.div`
    flex: none;
    width: 8px;
    align-self: stretch;
    border: solid #626262;
    border-width: 4px 2px;
    background:
        repeating-linear-gradient(90deg, transparent 0 1px, #707070 1px 2px),
        repeating-linear-gradient(#222222 0 1px, #808080 1px 2px);
`
const Divider = styled.div`
    flex: none;
    width: ${(props) => (props.$wide ? '7px' : '6px')};
    height: 18px;
    background: linear-gradient(90deg, transparent 3px, #d0d0d0 3px 4px, transparent 4px);
`
const ToolBtn = styled.button`
    display: flex;
    align-items: center;
    justify-content: center;
    flex: none;
    width: 23px;
    height: 23px;
`
const ComboBox = styled.div`
    display: flex;
    align-items: center;
    flex: none;
    width: ${(props) => props.$width}px;
    height: 22px;
    padding-left: ${(props) => (props.$tone === 'title' ? '2px' : '0')};
    background: #ebebeb;
    border: 1px solid #dedfd4;
    ${(props) => props.$tone === 'title' && css`
        background: linear-gradient(#b9b9b9, #dcdcdc);
        border-color: #ececec;
    `}
`
const ComboSelect = styled.select`
    appearance: none;
    flex: 1;
    min-width: 0;
    height: 20px;
    padding-left: ${(props) => (props.$tone === 'title' ? '2px' : '8px')};
    color: ${(props) => (props.$tone === 'title' ? '#858585' : '#a8a8a4')};
    font-family: ${MONO};
    font-size: ${(props) => (props.$small ? '10px' : '11px')};
    line-height: 20px;
`
const ComboArrow = styled.span`
    display: flex;
    align-items: center;
    justify-content: center;
    align-self: stretch;
    width: ${(props) => (props.$tone === 'title' ? '14px' : '18px')};
    background: ${(props) => (props.$tone === 'title' ? 'none' : '#f8f8ee')};
    pointer-events: none;
    svg {
        stroke: #c9c9bf;
    }
`
const LayerState = styled.span`
    display: flex;
    align-items: center;
    gap: 1px;
    padding-left: 2px;
`
const Swatch = styled.span`
    width: 10px;
    height: 10px;
    background: #0c0c0c;
    margin-left: ${(props) => (props.$pad ? '4px' : '1px')};
`
const LineSample = styled.span`
    width: ${(props) => props.$width}px;
    height: 1px;
    margin-left: 4px;
    background: #111;
`

const Workspace = styled.main`
    display: flex;
    flex: 1;
    gap: 4px;
    padding: 0 3px 4px 0;
`
const SideBar = styled.div`
    flex: none;
    width: 25px;
`
const SideTools = styled.div`
    display: flex;
    flex-direction: column;
    background: #f8f8f9;
    border: 1px solid #3f3f42;
    border-width: 0 2px 1px 1px;
`
const SideGrip = styled.div`
    height: 9px;
    border: solid #5f5f5f;
    border-width: 3px 4px;
    background:
        repeating-linear-gradient(transparent 0 1px, #707070 1px 2px),
        repeating-linear-gradient(90deg, #222222 0 1px, #808080 1px 2px);
`
const SideBtn = styled.button`
    display: flex;
    flex-direction: column;
    align-items: center;
    justify-content: center;
    width: 22px;
    height: 22px;
`
const SideDivider = styled.div`
    height: 6px;
    margin: 0 2px;
    border-top: 1px solid #bdbdbd;
`
const AbcIcon = styled.span`
    font-family: ${MONO};
    font-size: 8px;
    line-height: 8px;
    font-weight: bold;
`

const DrawingWindow = styled.section`
    display: flex;
    flex-direction: column;
    flex: 1;
    min-width: 0;
    border: 2px solid #a3a3a3;
    border-right-color: #f4f4f4;
    border-bottom-color: #f4f4f4;
    background: #fff;
`
const ViewArea = styled.div`
    display: flex;
    flex: 1;
    min-height: 0;
`
const Viewport = styled.div`
    position: relative;
    flex: 1;
    min-width: 0;
    overflow: hidden;
    background: #fff;
`
const DrawingSvg = styled.svg`
    position: absolute;
    inset: 0;
    width: 100%;
    height: 100%;
    fill: none;
    stroke: #000;
`
const ViewLabel = styled.div`
    position: absolute;
    left: 4px;
    top: 2px;
    font-family: "DejaVu Sans", "Noto Sans CJK SC", sans-serif;
    font-size: 12px;
    line-height: 20px;
`
const ViewCube = styled.div`
    position: absolute;
    top: 12px;
    right: 11px;
    display: flex;
    flex-direction: column;
    align-items: center;
    gap: 16px;
`
const CubeRow = styled.div`
    display: flex;
    align-items: center;
    gap: 16px;
`
const Compass = styled.span`
    width: 26px;
    text-align: center;
    color: #fff;
    font-size: 18px;
    line-height: 25px;
    -webkit-text-stroke: 1px #b9b9b9;
`
const CubeFace = styled.button`
    display: flex;
    align-items: center;
    justify-content: center;
    width: 48px;
    height: 48px;
    border: 1px solid #9a9a9a;
    span {
        width: 30px;
        height: 30px;
        background: #eef2f4;
        color: #9aa0a3;
        font-family: "Noto Sans CJK SC", sans-serif;
        font-size: 28px;
        font-weight: 300;
        line-height: 26px;
    }
`
const Wcs = styled.button`
    display: flex;
    align-items: center;
    gap: 6px;
    padding-top: 2px;
    color: #a9abbd;
    font-size: 11px;
`
const Ucs = styled.svg`
    position: absolute;
    left: 12px;
    bottom: 9px;
    fill: none;
    stroke: #000;
    shape-rendering: crispEdges;
`
const Tooltip = styled.div`
    position: absolute;
    left: 761px;
    top: 434px;
    display: flex;
    align-items: center;
    justify-content: space-between;
    width: 137px;
    height: 20px;
    padding: 0 3px 3px 1px;
    background: #a9a9a9;
    border: 1px solid #000;
    line-height: 14px;
    white-space: nowrap;
`
const ScrollV = styled.div`
    display: flex;
    flex-direction: column;
    width: 17px;
    background: #fbfbfd;
`
const ScrollBtn = styled.button`
    display: flex;
    align-items: center;
    justify-content: center;
    flex: none;
    width: 17px;
    height: 17px;
    max-height: 100%;
    border: 1px solid #9a9cab;
    border-radius: 2px;
    background: linear-gradient(#ffffff, #d8dae4);
    svg {
        stroke: #3b3d44;
    }
`
const Spring = styled.div`
    flex: ${(props) => props.$n || 1};
`
const SheetRow = styled.div`
    display: flex;
    align-items: stretch;
    height: 16px;
    background: #ededf0;
    border-top: 1px solid #848484;
`
const NavBtn = styled.button`
    display: flex;
    align-items: center;
    justify-content: center;
    width: 14px;
    border: 1px solid #c5c5c5;
    border-left-color: #fff;
`
const Slant = styled.svg`
    flex: none;
    fill: none;
    stroke: #555;
`
const SheetTab = styled.button`
    padding: 0 2px;
    background: ${(props) => (props.$on ? '#ffffff' : 'none')};
    font-size: 12px;
`
const ScrollH = styled.div`
    display: flex;
    flex: 0 1 457px;
    background: #fcfcfe;
`
const Corner = styled.div`
    width: 17px;
    background: #ededf0;
`

const Command = styled.section`
    display: flex;
    height: 57px;
    background: #fff;
`
const CommandStrip = styled.div`
    display: flex;
    flex-direction: column;
    align-items: center;
    width: 23px;
    padding-top: 4px;
    gap: 5px;
    background: linear-gradient(#8a8a8a, #5c5c5c);
`
const CommandGrip = styled.div`
    width: 17px;
    height: 5px;
    background:
        repeating-linear-gradient(transparent 0 2px, #808080 2px 3px),
        repeating-linear-gradient(90deg, #b4b4b4 0 2px, #7c7c7c 2px 3px);
`
const StripBtn = styled.button`
    display: flex;
    align-items: center;
    justify-content: center;
    width: 18px;
    height: 16px;
`
const CommandBody = styled.div`
    flex: 1;
    font-size: 13px;
    line-height: 18px;
`
const History = styled.div`
    height: 34px;
    padding: 14px 1px 0;
    background: #d5d5d5;
    border-bottom: 1px solid #777;
    font-family: ${MONO};
`
const Prompt = styled.div`
    display: flex;
    align-items: center;
    height: 23px;
    padding-left: 5px;
    border-bottom: 1px solid #333;
    white-space: nowrap;
    strong {
        margin: 0 5px 0 2px;
        font-family: "Liberation Serif", serif;
        font-size: 12px;
    }
    span + span {
        margin-left: 8px;
    }
`
const PromptOptions = styled.div`
    display: flex;
    align-items: center;
    margin-left: 8px;
    font-family: ${MONO};
    font-size: 13px;
`
const Option = styled.button`
    height: 18px;
    padding: 0 1px;
    background: #dedede;
    border-radius: 3px;
    font-size: 12px;
    line-height: 18px;
    b {
        color: #1a1aa8;
        font-weight: normal;
    }
`
const PromptInput = styled.input`
    flex: 1;
    outline: none;
`

const StatusBar = styled.footer`
    display: flex;
    height: 22px;
    background: linear-gradient(#7e7e7e, #a3a3a3);
    border-top: 1px solid #1c1c1c;
`
const Coords = styled.div`
    width: 217px;
    padding-left: 11px;
    font-family: ${MONO};
    font-size: 10px;
    line-height: 24px;
    white-space: pre;
`
const StatusBtn = styled.button`
    display: flex;
    align-items: center;
    justify-content: center;
    flex: none;
    width: ${(props) => props.$width || 22}px;
    background: linear-gradient(#b9b9b9, #cfcfcf);
    border-left: 1px solid #6f6f6f;
    font-size: 12px;
    ${(props) => props.$on && css`
        background: linear-gradient(#eefaff, #bfe6f5);
    `}
    ${(props) => props.$pressed && css`
        background: #a2a2a2;
        box-shadow: inset 1px 1px 2px #555;
    `}
`
const StatusGroup = styled.div`
    display: flex;
    margin-left: ${(props) => props.$gap || 0}px;
    border-right: 1px solid #6f6f6f;
`

const Taskbar = styled.div`
    position: relative;
    display: flex;
    align-items: center;
    height: 30px;
    background: linear-gradient(#fdfdff, #c3c4d6 18%, #e4e4ee 45%, #fafafd 80%, #a5a7bd);
`
const Start = styled.button`
    display: flex;
    align-items: center;
    gap: 5px;
    width: 98px;
    height: 28px;
    padding-left: 10px;
    border-radius: 0 10px 10px 0;
    background: linear-gradient(#9fd68f, #4ba53e 20%, #3f9c35 60%, #6fc45c 85%, #2f7a2a);
    box-shadow: inset -2px 0 3px #256b20;
    color: #f4fbef;
    font-size: 18px;
    font-style: italic;
    text-shadow: 1px 1px 1px #2b5a26;
`
const QuickLaunch = styled.div`
    display: flex;
    align-items: center;
    margin-left: 46px;
`
const LaunchBtn = styled.button`
    display: flex;
    justify-content: center;
    width: 23px;
`
const More = styled.button`
    width: 23px;
    height: 24px;
    padding-bottom: 8px;
    font-size: 16px;
    font-weight: bold;
`
const TaskBtn = styled.button`
    display: flex;
    align-items: center;
    gap: 4px;
    width: 158px;
    height: 25px;
    margin-left: 2px;
    padding-left: 8px;
    overflow: hidden;
    white-space: nowrap;
    font-family: ${MONO};
    font-size: 10px;
    background: ${(props) => (props.$on ? '#74808c' : 'linear-gradient(#ffffff, #e8e8f0)')};
    color: ${(props) => (props.$on ? '#fff' : '#222')};
    border: 1px solid ${(props) => (props.$on ? '#5c6873' : '#b9bacb')};
    border-radius: 3px;
`
const Language = styled.button`
    margin-right: 11px;
`
const Tray = styled.div`
    display: flex;
    align-items: center;
    height: 30px;
    padding: 0 13px 0 9px;
    border-left: 1px solid #7b7d92;
    background: linear-gradient(#ffffff, #d4d5e2 20%, #f2f2f8 60%, #ffffff 80%, #b3b5c8);
`
const TrayBtn = styled.button`
    display: flex;
    justify-content: center;
    width: 18px;
`
const Clock = styled.time`
    margin-left: 6px;
    font-family: ${MONO};
    font-size: 10px;
`
const Watermark = styled.div`
    position: absolute;
    left: 629px;
    bottom: 12px;
    display: flex;
    align-items: center;
    gap: 10px;
    color: #acacb0;
    font-family: "Noto Sans CJK SC", sans-serif;
    font-size: 33px;
    font-weight: 900;
    line-height: 40px;
    -webkit-text-stroke: 1px #85868b;
    opacity: 0.8;
    pointer-events: none;
`

export default App;
